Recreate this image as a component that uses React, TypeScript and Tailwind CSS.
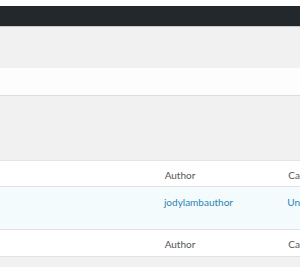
export default function App() {
  const font = { fontFamily: 'Lato, "Liberation Sans", Arial, sans-serif' };
  return (
    <div className="w-[300px] h-[279px] bg-white overflow-hidden text-[10px]" style={font}>
      <div className="h-[6px] bg-white" />
      <div className="h-[20px] bg-[#23282d]" />
      <div className="h-[1px] bg-[#c8cacc]" />
      <div className="h-[41px] bg-[#f1f1f1]" />
      <div className="h-[28px] bg-[#fdfdfd] border-b border-[#dcdcdc]" />
      <div className="h-[64px] bg-[#f1f1f1]" />
      <div className="border-t border-[#e5e5e5]">
        <div className="flex h-[26px] items-center pt-[3px] bg-white text-[#555] border-b border-[#e1e1e1]">
          <div className="w-[165px]" />
          <div className="w-[124px]">Author</div>
          <div>Ca</div>
        </div>
        <div className="flex h-[43px] pt-[8px] bg-[#f4fbfc] text-[#2a84b8] border-b border-[#e1e1e1]">
          <div className="w-[165px]" />
          <div className="w-[124px]">jodylambauthor</div>
          <div>Un</div>
        </div>
        <div className="flex h-[27px] items-center pt-[2px] bg-white text-[#555] border-b border-[#e1e1e1]">
          <div className="w-[165px]" />
          <div className="w-[124px]">Author</div>
          <div>Ca</div>
        </div>
      </div>
      <div className="h-[10px] bg-[#f1f1f1]" />
      <div className="h-[11px] bg-white" />
    </div>
  );
}
